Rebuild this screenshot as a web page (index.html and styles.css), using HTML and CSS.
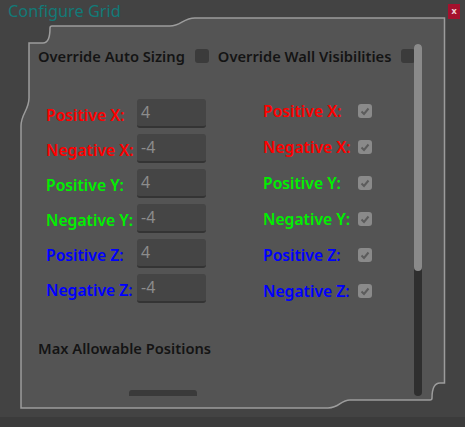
FILE: index.html
```html
<!DOCTYPE html>
<html>
<head>
<meta charset="utf-8">
<link rel="stylesheet" href="styles.css">
</head>
<body>
<div class="window">
  <svg class="frame" width="465" height="427" viewBox="0 0 465 427">
    <path d="M21,408 L21,126 C21,114 29,110 29,98 L29,43 L43,43 Q50,43 50,28 Q50,26 52,26 L170,26 C181,26 183,18 195,18 L444.5,18 L444.5,383 L440,383 Q432,383 432,398 Q432,400 430,400 L350,400 C340,400 340,408 328,408 Z" fill="#545454" stroke="#9c9c9c" stroke-width="1.5"/>
  </svg>
  <div class="titlebar">
    <span class="title">Configure Grid</span>
    <span class="close">x</span>
  </div>
  <div class="scroll">
    <div class="content">
      <div class="top-row">
        <span class="heading">Override Auto Sizing</span>
        <span class="cb cb-off"></span>
        <span class="heading heading-2">Override Wall Visibilities</span>
        <span class="cb cb-off"></span>
      </div>
      <div class="fields">
        <div class="col-left">
          <div class="field"><span class="lbl red">Positive X:</span><span class="input">4</span></div>
          <div class="field"><span class="lbl red">Negative X:</span><span class="input">-4</span></div>
          <div class="field"><span class="lbl green">Positive Y:</span><span class="input">4</span></div>
          <div class="field"><span class="lbl green">Negative Y:</span><span class="input">-4</span></div>
          <div class="field"><span class="lbl blue">Positive Z:</span><span class="input">4</span></div>
          <div class="field"><span class="lbl blue">Negative Z:</span><span class="input">-4</span></div>
        </div>
        <div class="col-right">
          <div class="toggle"><span class="lbl-r red">Positive X:</span><span class="cb cb-on"><svg width="14" height="14" viewBox="0 0 14 14"><polyline points="3.5,7.5 6,10 10.5,4.5" fill="none" stroke="#5c5c5c" stroke-width="2"/></svg></span></div>
          <div class="toggle"><span class="lbl-r red">Negative X:</span><span class="cb cb-on"><svg width="14" height="14" viewBox="0 0 14 14"><polyline points="3.5,7.5 6,10 10.5,4.5" fill="none" stroke="#5c5c5c" stroke-width="2"/></svg></span></div>
          <div class="toggle"><span class="lbl-r green">Positive Y:</span><span class="cb cb-on"><svg width="14" height="14" viewBox="0 0 14 14"><polyline points="3.5,7.5 6,10 10.5,4.5" fill="none" stroke="#5c5c5c" stroke-width="2"/></svg></span></div>
          <div class="toggle"><span class="lbl-r green">Negative Y:</span><span class="cb cb-on"><svg width="14" height="14" viewBox="0 0 14 14"><polyline points="3.5,7.5 6,10 10.5,4.5" fill="none" stroke="#5c5c5c" stroke-width="2"/></svg></span></div>
          <div class="toggle"><span class="lbl-r blue">Positive Z:</span><span class="cb cb-on"><svg width="14" height="14" viewBox="0 0 14 14"><polyline points="3.5,7.5 6,10 10.5,4.5" fill="none" stroke="#5c5c5c" stroke-width="2"/></svg></span></div>
          <div class="toggle"><span class="lbl-r blue">Negative Z:</span><span class="cb cb-on"><svg width="14" height="14" viewBox="0 0 14 14"><polyline points="3.5,7.5 6,10 10.5,4.5" fill="none" stroke="#5c5c5c" stroke-width="2"/></svg></span></div>
        </div>
      </div>
      <div class="heading max">Max Allowable Positions</div>
      <div class="spin"></div>
    </div>
    <div class="scrollbar"><div class="thumb"></div></div>
  </div>
</div>
</body>
</html>
```
FILE: styles.css
```css
html, body {
  margin: 0;
  padding: 0;
}
body {
  background: #3b3b3b;
  font-family: "Noto Sans", "Open Sans", sans-serif;
  width: 465px;
  height: 427px;
  overflow: hidden;
}
.window {
  position: relative;
  width: 465px;
  height: 417px;
  background: #434343;
  display: flex;
  flex-direction: column;
}
.frame {
  position: absolute;
  left: 0;
  top: 0;
}
.titlebar {
  position: relative;
  height: 22px;
  display: flex;
  justify-content: space-between;
  align-items: flex-start;
  padding: 0 5px 0 8px;
}
.title {
  color: #127a78;
  font-size: 16.3px;
  line-height: 22px;
}
.close {
  margin-top: 4px;
  width: 12px;
  height: 15px;
  background: #a5102d;
  color: #f0d0d6;
  font-size: 9px;
  line-height: 14px;
  text-align: center;
  font-weight: 700;
}
.scroll {
  position: relative;
  margin: 18px 42px 0 30px;
  height: 356px;
  overflow: hidden;
}
.content {
  padding: 8px 0 0 8px;
}
.top-row {
  display: flex;
  align-items: center;
  height: 16px;
}
.heading {
  color: #141414;
  font-size: 14.7px;
  font-weight: 600;
  line-height: 16px;
  white-space: nowrap;
}
.heading-2 {
  margin-left: 9px;
}
.cb {
  flex: none;
  width: 14px;
  height: 14px;
  border-radius: 3px;
  display: block;
}
.cb-off {
  background: #3b3b3b;
  margin-left: 10px;
}
.cb-on {
  background: #8a8a8a;
}
.cb svg {
  display: block;
}
.fields {
  display: flex;
  margin-top: 35px;
  padding-left: 8px;
}
.col-left {
  width: 217px;
  display: flex;
  flex-direction: column;
  gap: 6px;
}
.field {
  display: flex;
  align-items: center;
  height: 29px;
}
.lbl {
  width: 91px;
  font-size: 15.7px;
  font-weight: 600;
  line-height: 18px;
  white-space: nowrap;
  padding-top: 2px;
}
.input {
  box-sizing: border-box;
  width: 69px;
  height: 29px;
  background: #454545;
  border-bottom: 2px solid #343434;
  border-radius: 3px;
  color: #8c8c8c;
  font-size: 16px;
  line-height: 27px;
  padding-left: 4px;
}
.col-right {
  display: flex;
  flex-direction: column;
  gap: 12px;
}
.toggle {
  display: flex;
  align-items: center;
  height: 24px;
}
.lbl-r {
  width: 95px;
  font-size: 15.7px;
  font-weight: 600;
  line-height: 18px;
  white-space: nowrap;
}
.red { color: #ff0000; }
.green { color: #00f000; }
.blue { color: #0000ff; }
.max {
  margin-top: 37px;
}
.spin {
  margin-top: 34px;
  margin-left: 91px;
  width: 68px;
  height: 20px;
  background: #3a3a3a;
  border-radius: 3px;
}
.scrollbar {
  position: absolute;
  left: 384px;
  top: 4px;
  bottom: 0;
  width: 8px;
  border-radius: 4px;
  background: #2f2f2f;
}
.thumb {
  height: 227px;
  border-radius: 4px;
  background: #8a8a8a;
}
```
